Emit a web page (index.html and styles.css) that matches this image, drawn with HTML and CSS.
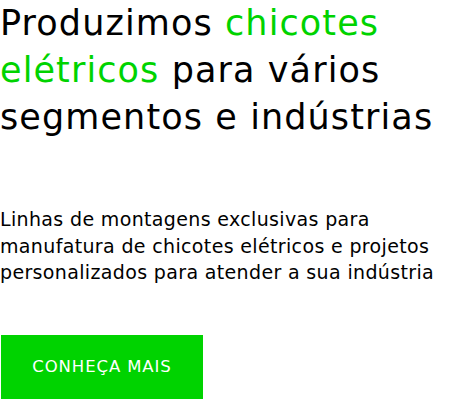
FILE: index.html
```html
<!DOCTYPE html>
<html lang="pt-BR">
<head>
<meta charset="utf-8">
<link rel="stylesheet" href="styles.css">
</head>
<body>
<section class="hero">
  <h1 class="title">Produzimos <span class="accent">chicotes elétricos</span> para vários segmentos e indústrias</h1>
  <p class="lead">Linhas de montagens exclusivas para manufatura de chicotes elétricos e projetos personalizados para atender a sua indústria</p>
  <a class="cta" href="#">CONHEÇA MAIS</a>
</section>
</body>
</html>
```

FILE: styles.css
```css
html, body {
  margin: 0;
  padding: 0;
  background: #fff;
}
.hero {
  display: flex;
  flex-direction: column;
  align-items: flex-start;
  font-family: "DejaVu Sans", "Open Sans", sans-serif;
  color: #000;
}
.title {
  margin: 0;
  font-weight: 400;
  font-size: 35px;
  line-height: 47px;
  letter-spacing: 1.1px;
}
.accent {
  color: #00d300;
}
.lead {
  margin: 65px 0 0 0;
  font-size: 19px;
  line-height: 26.5px;
  letter-spacing: 0.35px;
  color: #000;
}
.cta {
  margin: 49px 0 0 1px;
  width: 202px;
  height: 64px;
  display: flex;
  align-items: center;
  justify-content: center;
  background: #00d300;
  color: #fff;
  text-decoration: none;
  font-size: 16.5px;
  letter-spacing: 0.9px;
}
```
